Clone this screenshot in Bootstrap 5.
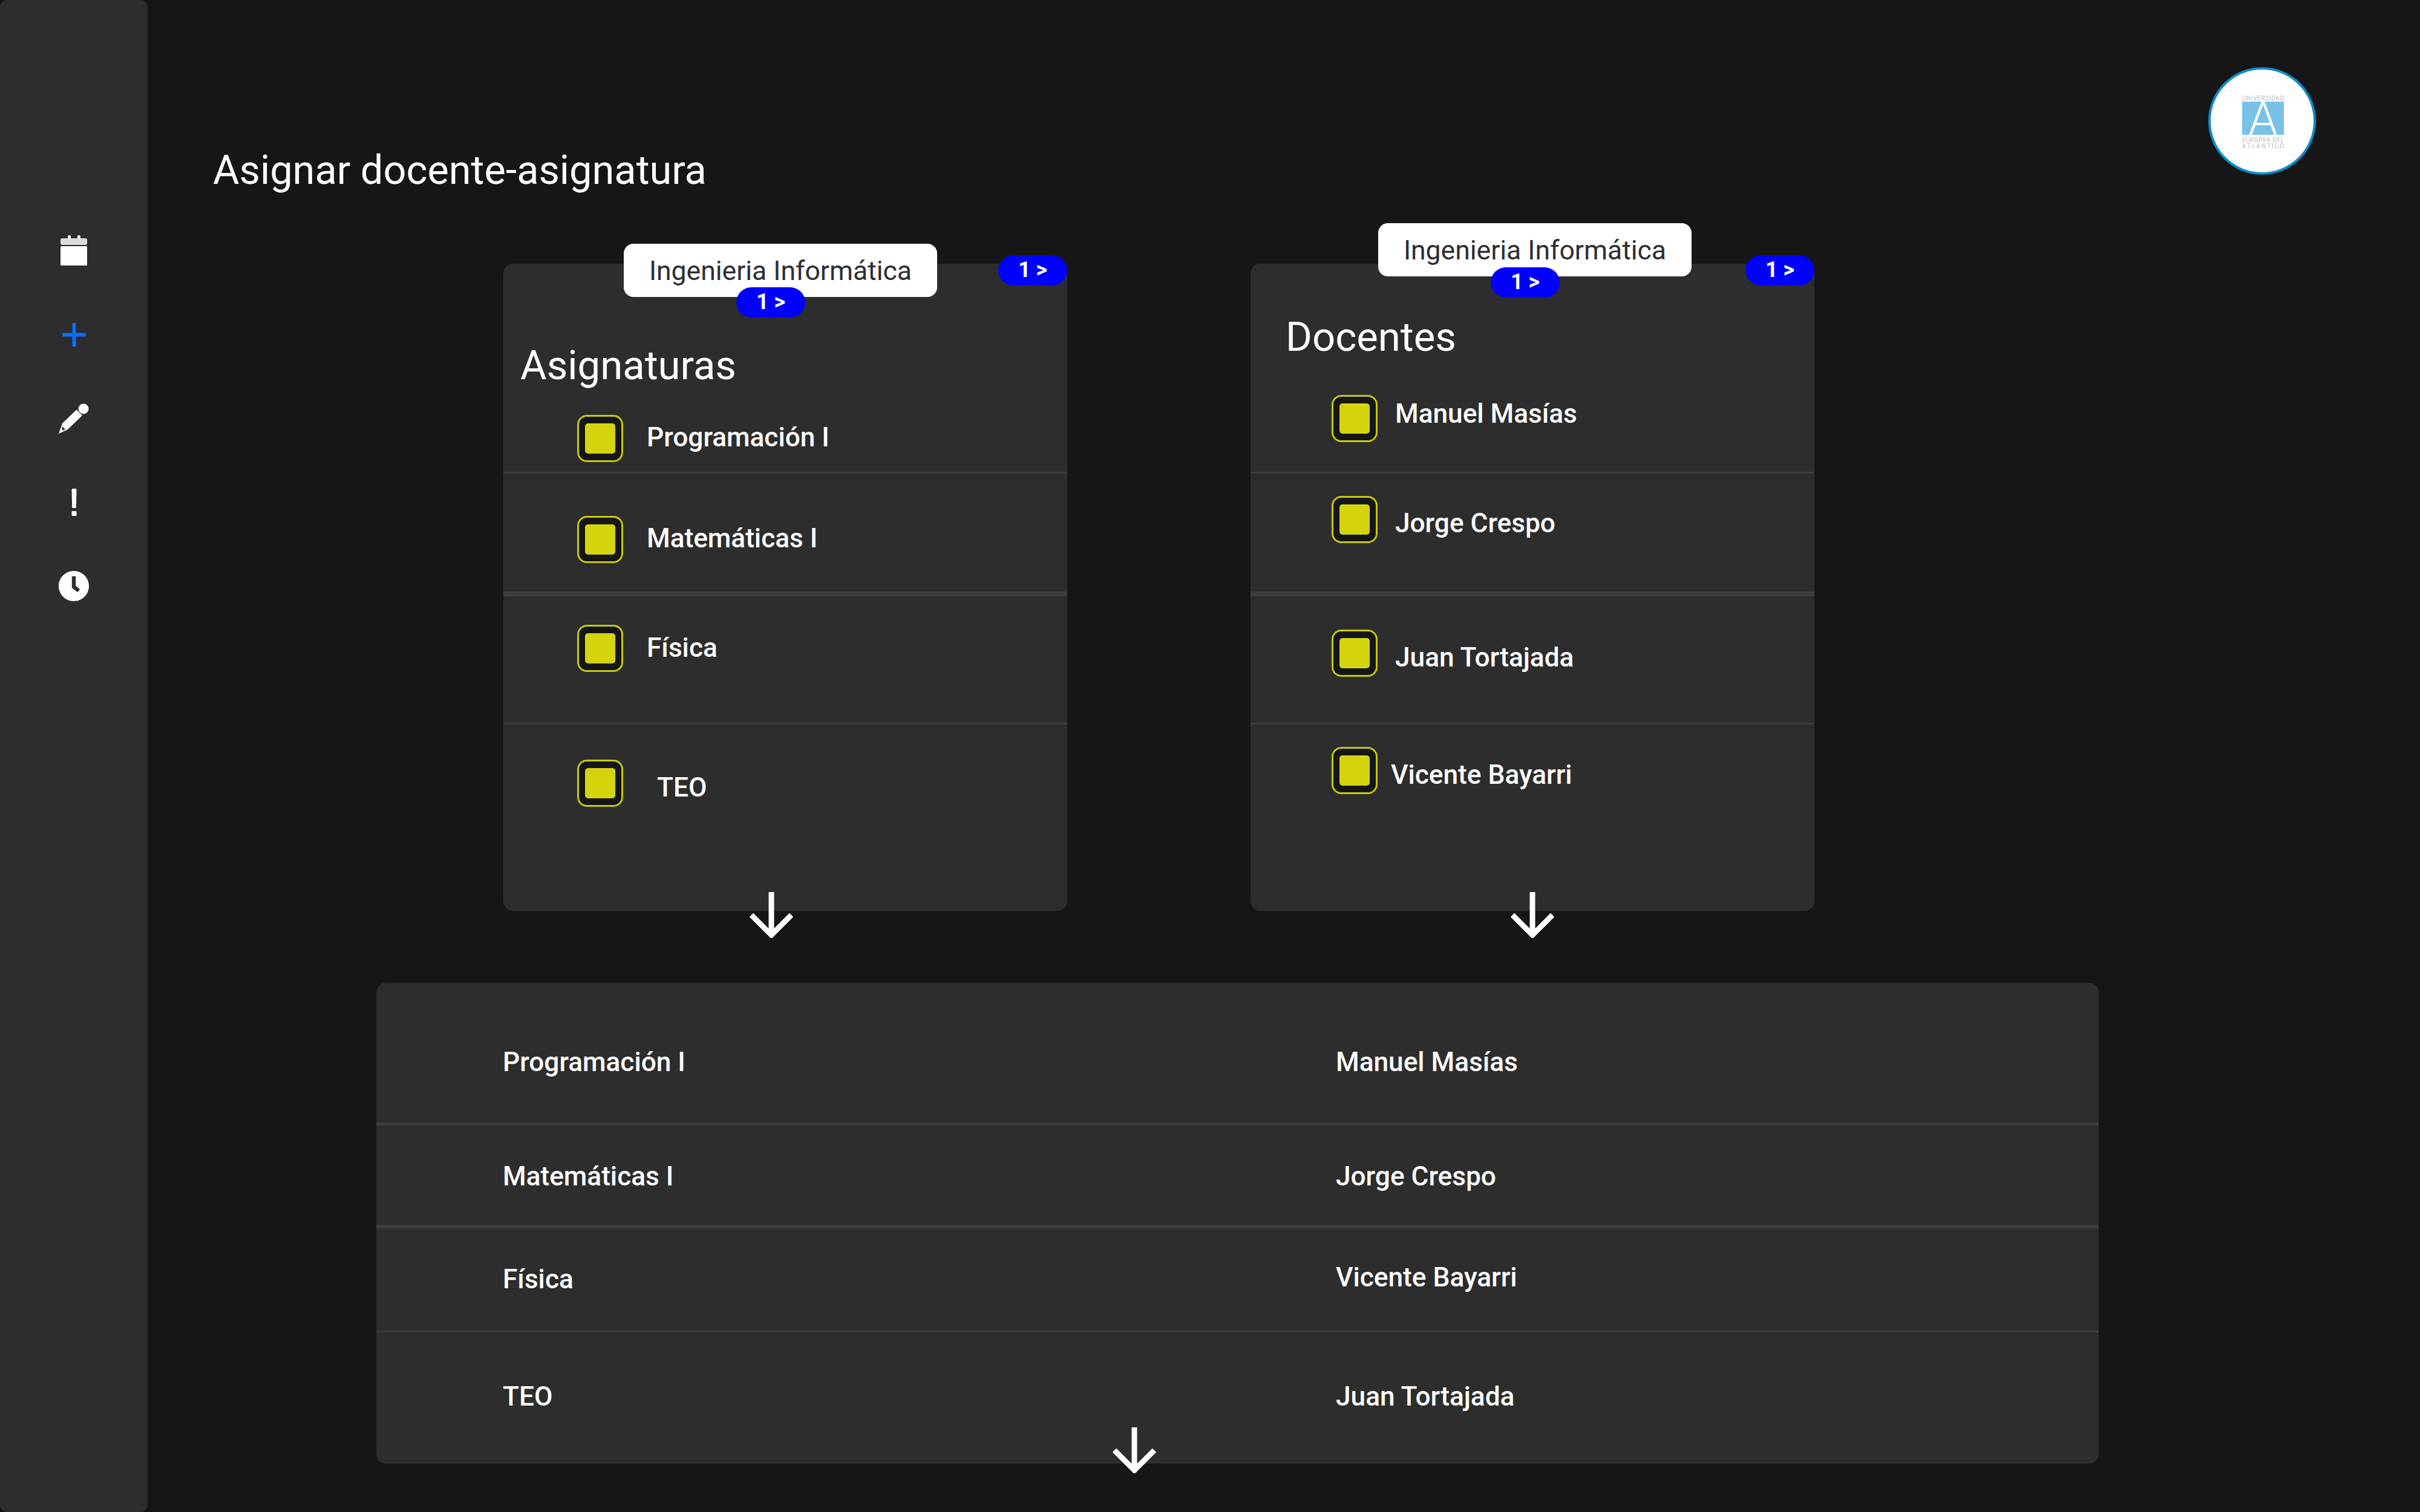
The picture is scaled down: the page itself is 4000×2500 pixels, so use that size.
<!DOCTYPE html>
<html lang="es">
<head>
    <meta charset="UTF-8">
    <meta name="viewport" content="width=device-width, initial-scale=1">
    <title>Asignar docente-asignatura</title>
    <link href="https://cdn.jsdelivr.net/npm/bootstrap@5.3.0/dist/css/bootstrap.min.css" rel="stylesheet">
    <style>
        body {
            background: #161616;
            color: #fff;
            font-family: Roboto, "Liberation Sans", sans-serif;
        }
        .page-shell {
            min-height: 2500px;
        }
        /* Sidebar */
        .side-bar {
            width: 244px;
            flex: none;
            background: #2d2d2d;
            border-radius: 12px;
            padding-top: 345px;
        }
        .side-slot {
            height: 138.7px;
        }
        .ic-cal { width: 44px; height: 50px; }
        .ic-plus { width: 39px; height: 39px; }
        .ic-round { width: 50px; height: 50px; }
        .ic-excl { width: 11px; height: 45px; }

        /* Header */
        .page-main {
            width: 3756px;
        }
        .page-head {
            height: 436px;
            padding: 111px 172px 0 108px;
        }
        .page-title {
            font-size: 66.7px;
            font-weight: 400;
            line-height: 78px;
            margin: 131px 0 0;
        }
        .logo-mark {
            width: 178px;
            height: 178px;
        }
        .logo-mark text {
            font-family: Roboto, "Liberation Sans", sans-serif;
        }

        /* Panes */
        .pane-row {
            margin-left: 588px;
            gap: 303px;
        }
        .pane {
            width: 932px;
            height: 1070px;
            background: #2d2d2d;
            border: 0;
            border-radius: 16px;
            color: #fff;
        }
        .pane-title {
            font-size: 67px;
            font-weight: 400;
            line-height: 77px;
            margin: 0;
        }
        #paneAsig .pane-title { padding: 130px 0 0 28px; }
        #paneDoc .pane-title { padding: 83px 0 47px 58px; }

        .chip-carrera {
            width: 518px;
            height: 88px;
            padding-top: 3px;
            background: #fff;
            color: #2d2f33;
            border-radius: 16px;
            font-size: 44.5px;
            font-weight: 400;
        }
        #paneAsig .chip-carrera { left: 199px; top: -33px; }
        #paneDoc .chip-carrera { left: 211px; top: -67px; }

        .count-pill {
            width: 114px;
            height: 50px;
            background: #00f;
            color: #fff;
            font-size: 36px;
            font-weight: 700;
            line-height: 1;
            padding: 0 0 3px;
            border-radius: 25px;
        }
        .count-pill.is-corner { right: 0; top: -14px; }
        #paneAsig .count-pill.is-chip { left: 385px; top: 39px; }
        #paneDoc .count-pill.is-chip { left: 397px; top: 6px; }

        .drop-arrow {
            width: 72px;
            height: 76px;
            top: 1039px;
        }
        #paneAsig .drop-arrow { left: 407px; }
        #paneDoc .drop-arrow { left: 430px; }

        /* Filas */
        .pick-list .list-group-item,
        .pair-list .list-group-item {
            background: transparent;
            color: #fff;
            border-color: #3d3d3d;
            padding: 0;
        }
        .pick-list .list-group-item {
            padding-left: 122px;
        }
        .pick-list .list-group-item:nth-child(1) { height: 140px; border-width: 0 0 3px; }
        .pick-list .list-group-item:nth-child(2) { height: 203px; border-width: 0 0 8px; }
        .pick-list .list-group-item:nth-child(3) { height: 212px; border-width: 0 0 3px; }
        .pick-list .list-group-item:nth-child(4) { height: 240px; border-width: 0; }

        #paneAsig .list-group-item:nth-child(1) { padding-top: 43px; }
        #paneAsig .list-group-item:nth-child(2) { padding-top: 70px; }
        #paneAsig .list-group-item:nth-child(3) { padding-top: 47px; }
        #paneAsig .list-group-item:nth-child(4) { padding-top: 58px; }
        #paneDoc .list-group-item { padding-left: 134px; }
        #paneDoc .list-group-item:nth-child(1) { padding-top: 10px; }
        #paneDoc .list-group-item:nth-child(2) { padding-top: 37px; }
        #paneDoc .list-group-item:nth-child(3) { padding-top: 55px; }
        #paneDoc .list-group-item:nth-child(4) { padding-top: 37px; }

        .pick-box {
            width: 76px;
            height: 78px;
            flex: none;
            background: #161616;
            border: 3px solid #c8c80c;
            border-radius: 16px;
        }
        .pick-fill {
            width: 50px;
            height: 50px;
            background: #d4d40e;
            border-radius: 5px;
        }
        .row-label {
            font-size: 44.2px;
            font-weight: 500;
            line-height: 66px;
            white-space: nowrap;
        }
        .pick-list .row-label { margin-left: 39px; }
        #paneDoc .pick-list .row-label { margin-left: 29px; }
        #paneAsig .list-group-item:nth-child(1) .row-label { margin-top: 4px; }
        #paneAsig .list-group-item:nth-child(2) .row-label { margin-top: 4px; }
        #paneAsig .list-group-item:nth-child(3) .row-label { margin-top: 5px; }
        #paneAsig .list-group-item:nth-child(4) .row-label { margin-top: 13px; margin-left: 56px; }
        #paneDoc .list-group-item:nth-child(1) .row-label { margin-top: -2px; }
        #paneDoc .list-group-item:nth-child(2) .row-label { margin-top: 12px; }
        #paneDoc .list-group-item:nth-child(3) .row-label { margin-top: 13px; }
        #paneDoc .list-group-item:nth-child(4) .row-label { margin-top: 13px; margin-left: 22px; }

        /* Tabla resultado */
        .pair-pane {
            width: 2847px;
            height: 795px;
            margin: 119px 0 0 378px;
            background: #2d2d2d;
            border: 0;
            border-radius: 16px;
        }
        .pair-list .list-group-item { padding-left: 209px; }
        .pair-list .list-group-item:nth-child(1) { height: 236px; padding-top: 98px; border-width: 0 0 5px; }
        .pair-list .list-group-item:nth-child(2) { height: 170px; padding-top: 51px; border-width: 0 0 6px; }
        .pair-list .list-group-item:nth-child(3) { height: 172px; padding-top: 51px; border-width: 0 0 3px; }
        .pair-list .list-group-item:nth-child(4) { height: 217px; padding-top: 73px; border-width: 0; }
        .pair-left { width: 1377px; }
        .pair-list .list-group-item:nth-child(3) .pair-right { margin-top: -3px; }
        .pair-arrow {
            width: 72px;
            height: 76px;
            left: 1217px;
            top: 735px;
        }
    </style>
</head>
<body>

    <div class="page-shell d-flex">
        <!-- Sidebar -->
        <nav class="side-bar">
            <div class="side-slot d-flex align-items-center justify-content-center">
                <svg class="ic-cal" viewBox="0 0 44 50" fill="#fff"><rect x="12" width="5" height="8" rx="2"/><rect x="28" width="5" height="8" rx="2"/><rect y="5" width="44" height="11" rx="3" fill="#dcdcdc"/><rect y="18" width="44" height="32" rx="1.500"/></svg>
            </div>
            <div class="side-slot d-flex align-items-center justify-content-center">
                <svg class="ic-plus" viewBox="0 0 39 39" fill="#0d6efd"><path d="M16.5 0h6v16.5H39v6H22.5V39h-6V22.5H0v-6h16.5z"/></svg>
            </div>
            <div class="side-slot d-flex align-items-center justify-content-center">
                <svg class="ic-round" viewBox="15 15 50 50" fill="#fff"><circle cx="56" cy="24" r="8.500"/><path d="M44.500 25.500 54 35 30 58 15 65 21 48z"/><path d="M20.500 53 26 57.500 21 60z" fill="#2d2d2d"/></svg>
            </div>
            <div class="side-slot d-flex align-items-center justify-content-center">
                <svg class="ic-excl" viewBox="0 0 11 45" fill="#fff"><path d="M1.500 1.500C1.500.7 2.200 0 3 0h5c.8 0 1.500.7 1.500 1.500L8.800 31c0 .6-.5 1-1 1H3.200c-.5 0-1-.4-1-1zM1.500 38.500c0-.8.7-1.500 1.500-1.500h5c.8 0 1.500.7 1.500 1.500V43.500c0 .8-.7 1.500-1.500 1.500H3c-.8 0-1.500-.7-1.500-1.500z"/></svg>
            </div>
            <div class="side-slot d-flex align-items-center justify-content-center">
                <svg class="ic-round" viewBox="8 8 496 496" fill="#fff"><path d="M256,8C119,8,8,119,8,256S119,504,256,504,504,393,504,256,393,8,256,8Zm92.49,313h0l-20,25a16,16,0,0,1-22.49,2.5h0l-67-49.72a40,40,0,0,1-15-31.23V112a16,16,0,0,1,16-16h32a16,16,0,0,1,16,16V256l58,42.5A16,16,0,0,1,348.49,321Z"/></svg>
            </div>
        </nav>

        <main class="page-main">
            <!-- Title and logo -->
            <header class="page-head d-flex justify-content-between align-items-start">
                <h1 class="page-title">Asignar docente-asignatura</h1>
                <svg class="logo-mark" viewBox="0 0 178 178">
                    <circle cx="89" cy="89" r="87" fill="#fff" stroke="#0d8ccc" stroke-width="4"/>
                    <rect x="56" y="57" width="69" height="55" fill="#79c1e8"/>
                    <text x="90.500" y="112" font-size="77" font-weight="300" fill="#fff" text-anchor="middle">A</text>
                    <text x="56" y="55" font-size="10" fill="#bdbdbd" textLength="69">UNIVERSIDAD</text>
                    <text x="56" y="124" font-size="10" fill="#bdbdbd" textLength="69">EUROPEA DEL</text>
                    <text x="56" y="134" font-size="10" fill="#bdbdbd" textLength="69">ATLÁNTICO</text>
                </svg>
            </header>

            <div class="pane-row d-flex">
                <!-- Asignaturas -->
                <section class="card pane position-relative" id="paneAsig">
                    <h2 class="pane-title">Asignaturas</h2>
                    <span class="chip-carrera position-absolute d-flex align-items-center justify-content-center">Ingenieria Informática</span>
                    <span class="badge count-pill is-corner position-absolute d-flex align-items-center justify-content-center">1 &gt;</span>
                    <span class="badge count-pill is-chip position-absolute d-flex align-items-center justify-content-center">1 &gt;</span>
                    <div class="list-group list-group-flush pick-list">
                        <div class="list-group-item d-flex align-items-start">
                            <span class="pick-box d-flex align-items-center justify-content-center"><span class="pick-fill"></span></span>
                            <span class="row-label">Programación I</span>
                        </div>
                        <div class="list-group-item d-flex align-items-start">
                            <span class="pick-box d-flex align-items-center justify-content-center"><span class="pick-fill"></span></span>
                            <span class="row-label">Matemáticas I</span>
                        </div>
                        <div class="list-group-item d-flex align-items-start">
                            <span class="pick-box d-flex align-items-center justify-content-center"><span class="pick-fill"></span></span>
                            <span class="row-label">Física</span>
                        </div>
                        <div class="list-group-item d-flex align-items-start">
                            <span class="pick-box d-flex align-items-center justify-content-center"><span class="pick-fill"></span></span>
                            <span class="row-label">TEO</span>
                        </div>
                    </div>
                    <svg class="drop-arrow position-absolute" viewBox="0 0 72 76" fill="none" stroke="#fff" stroke-width="9"><path d="M36 0v70M3 38l33 33 33-33"/></svg>
                </section>

                <!-- Docentes -->
                <section class="card pane position-relative" id="paneDoc">
                    <h2 class="pane-title">Docentes</h2>
                    <span class="chip-carrera position-absolute d-flex align-items-center justify-content-center">Ingenieria Informática</span>
                    <span class="badge count-pill is-corner position-absolute d-flex align-items-center justify-content-center">1 &gt;</span>
                    <span class="badge count-pill is-chip position-absolute d-flex align-items-center justify-content-center">1 &gt;</span>
                    <div class="list-group list-group-flush pick-list">
                        <div class="list-group-item d-flex align-items-start">
                            <span class="pick-box d-flex align-items-center justify-content-center"><span class="pick-fill"></span></span>
                            <span class="row-label">Manuel Masías</span>
                        </div>
                        <div class="list-group-item d-flex align-items-start">
                            <span class="pick-box d-flex align-items-center justify-content-center"><span class="pick-fill"></span></span>
                            <span class="row-label">Jorge Crespo</span>
                        </div>
                        <div class="list-group-item d-flex align-items-start">
                            <span class="pick-box d-flex align-items-center justify-content-center"><span class="pick-fill"></span></span>
                            <span class="row-label">Juan Tortajada</span>
                        </div>
                        <div class="list-group-item d-flex align-items-start">
                            <span class="pick-box d-flex align-items-center justify-content-center"><span class="pick-fill"></span></span>
                            <span class="row-label">Vicente Bayarri</span>
                        </div>
                    </div>
                    <svg class="drop-arrow position-absolute" viewBox="0 0 72 76" fill="none" stroke="#fff" stroke-width="9"><path d="M36 0v70M3 38l33 33 33-33"/></svg>
                </section>
            </div>

            <!-- Resultado -->
            <section class="card pair-pane position-relative">
                <div class="list-group list-group-flush pair-list">
                    <div class="list-group-item d-flex align-items-start">
                        <span class="row-label pair-left">Programación I</span>
                        <span class="row-label pair-right">Manuel Masías</span>
                    </div>
                    <div class="list-group-item d-flex align-items-start">
                        <span class="row-label pair-left">Matemáticas I</span>
                        <span class="row-label pair-right">Jorge Crespo</span>
                    </div>
                    <div class="list-group-item d-flex align-items-start">
                        <span class="row-label pair-left">Física</span>
                        <span class="row-label pair-right">Vicente Bayarri</span>
                    </div>
                    <div class="list-group-item d-flex align-items-start">
                        <span class="row-label pair-left">TEO</span>
                        <span class="row-label pair-right">Juan Tortajada</span>
                    </div>
                </div>
                <svg class="pair-arrow position-absolute" viewBox="0 0 72 76" fill="none" stroke="#fff" stroke-width="9"><path d="M36 0v70M3 38l33 33 33-33"/></svg>
            </section>
        </main>
    </div>

    <script src="https://cdn.jsdelivr.net/npm/bootstrap@5.3.0/dist/js/bootstrap.bundle.min.js"></script>
</body>
</html>
